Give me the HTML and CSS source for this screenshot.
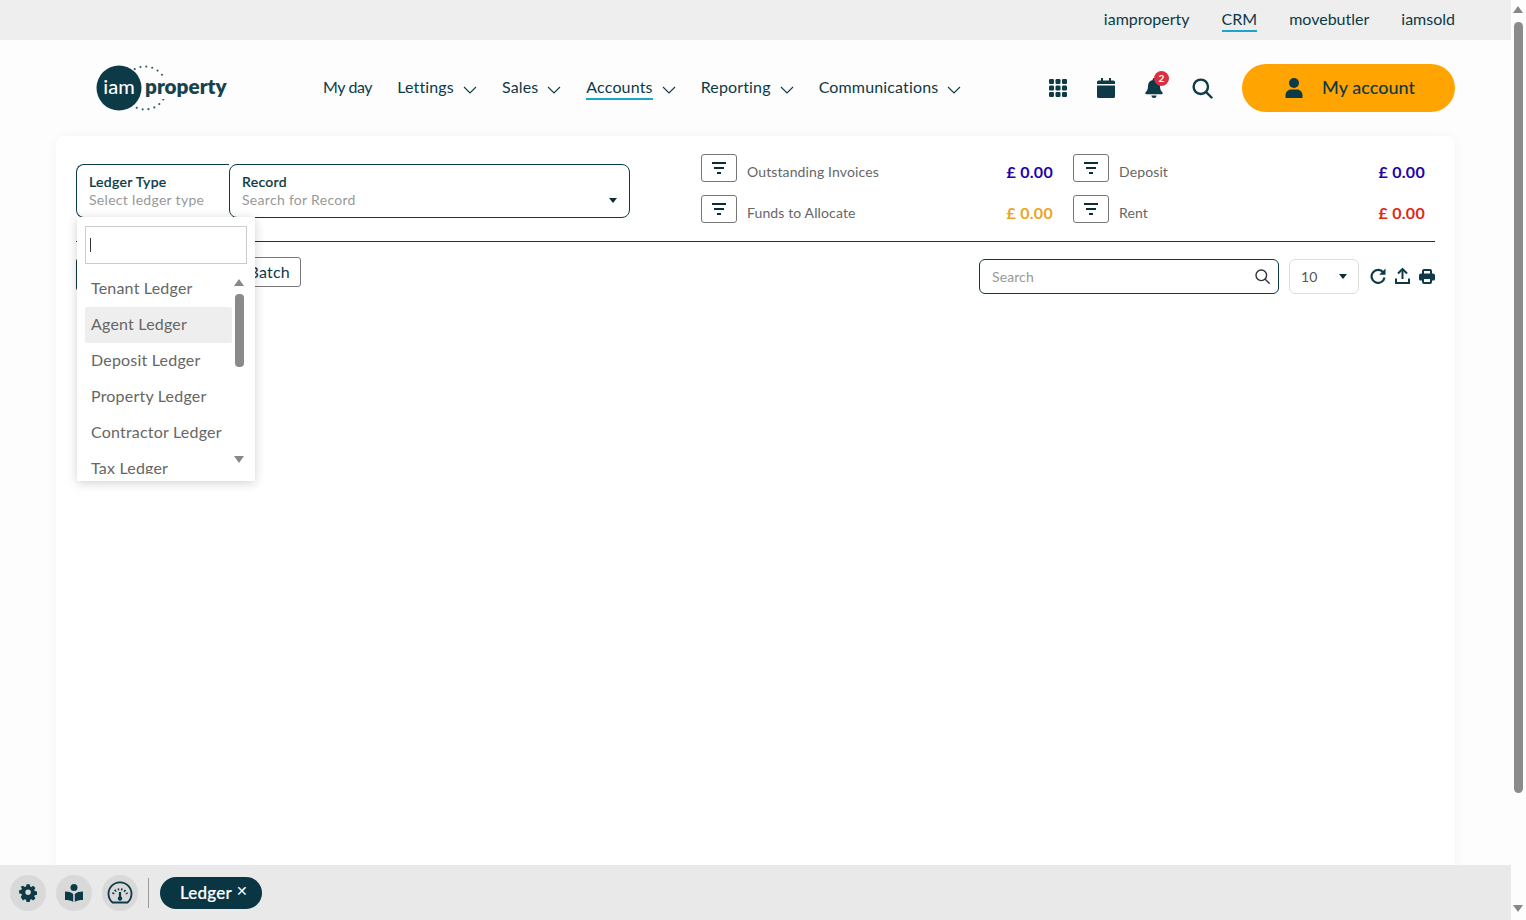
FILE: index.html
```html
<!DOCTYPE html>
<html lang="en">
<head>
<meta charset="utf-8">
<title>Ledger</title>
<link rel="stylesheet" href="styles.css">
</head>
<body>
<div class="viewport">
  <div class="page">
    <div class="topbar">
      <a class="top-link">iamproperty</a>
      <a class="top-link active">CRM</a>
      <a class="top-link">movebutler</a>
      <a class="top-link">iamsold</a>
    </div>
    <header class="header">
      <svg class="logo" width="144" height="56" viewBox="0 0 144 56">
        <circle cx="57" cy="28" r="21.5" fill="none" stroke="#3c5f69" stroke-width="2.200" stroke-linecap="round" stroke-dasharray="0 6"/>
        <rect x="52" y="17" width="92" height="22" class="logo-gap"/>
        <circle cx="31" cy="28" r="22.5" fill="#0c3a47"/>
        <text x="31" y="34" class="logo-iam" text-anchor="middle">iam</text>
        <text x="57" y="34" class="logo-prop">property</text>
      </svg>
      <nav class="nav">
        <a class="nav-item"><span class="nav-text nav-first">My day</span></a>
        <a class="nav-item"><span class="nav-text">Lettings</span><svg class="chev" width="14" height="8" viewBox="0 0 14 8"><path d="M1 1l6 6 6-6"/></svg></a>
        <a class="nav-item"><span class="nav-text">Sales</span><svg class="chev" width="14" height="8" viewBox="0 0 14 8"><path d="M1 1l6 6 6-6"/></svg></a>
        <a class="nav-item"><span class="nav-text current">Accounts</span><svg class="chev" width="14" height="8" viewBox="0 0 14 8"><path d="M1 1l6 6 6-6"/></svg></a>
        <a class="nav-item"><span class="nav-text">Reporting</span><svg class="chev" width="14" height="8" viewBox="0 0 14 8"><path d="M1 1l6 6 6-6"/></svg></a>
        <a class="nav-item"><span class="nav-text">Communications</span><svg class="chev" width="14" height="8" viewBox="0 0 14 8"><path d="M1 1l6 6 6-6"/></svg></a>
      </nav>
      <div class="header-icons">
        <span class="hicon"><svg width="18" height="18" viewBox="0 0 18 18" fill="#0c3a47"><rect x="0" y="0" width="5" height="5" rx="1.200"/><rect x="6.500" y="0" width="5" height="5" rx="1.200"/><rect x="13" y="0" width="5" height="5" rx="1.200"/><rect x="0" y="6.500" width="5" height="5" rx="1.200"/><rect x="6.500" y="6.500" width="5" height="5" rx="1.200"/><rect x="13" y="6.500" width="5" height="5" rx="1.200"/><rect x="0" y="13" width="5" height="5" rx="1.200"/><rect x="6.500" y="13" width="5" height="5" rx="1.200"/><rect x="13" y="13" width="5" height="5" rx="1.200"/></svg></span>
        <span class="hicon"><svg width="18" height="20" viewBox="0 0 18 20" fill="#0c3a47"><path d="M4 0h2v2.500h6V0h2v2.500h2.500A1.500 1.500 0 0 1 18 4v2H0V4a1.500 1.500 0 0 1 1.500-1.500H4zM0 7.500h18v11a1.500 1.500 0 0 1-1.500 1.500h-15A1.500 1.500 0 0 1 0 18.500z"/></svg></span>
        <span class="hicon bell"><svg width="18" height="20" viewBox="0 0 18 20" fill="#0c3a47"><path d="M9 0a1.300 1.300 0 0 1 1.300 1.300v.8c3 .6 4.700 3 4.700 6 0 3.700 1 5 2.500 6.500.5.600.2 1.600-.8 1.600H1.300c-1 0-1.300-1-.8-1.600C2 13.100 3 11.800 3 8.100c0-3 1.700-5.400 4.700-6v-.8A1.300 1.300 0 0 1 9 0zM6.500 17.500h5A2.500 2.500 0 0 1 9 20a2.500 2.500 0 0 1-2.500-2.500z"/></svg><span class="badge">2</span></span>
        <span class="hicon"><svg width="21" height="21" viewBox="0 0 21 21" fill="none" stroke="#0c3a47" stroke-width="2.400" stroke-linecap="round"><circle cx="8.800" cy="8.800" r="7.200"/><path d="M14 14l5.500 5.500"/></svg></span>
      </div>
      <button class="account">
        <svg width="20" height="20" viewBox="0 0 20 20" fill="#0c3a47"><circle cx="10" cy="5" r="5"/><path d="M1.500 20v-2.500c0-3.500 2.500-6 5.500-6h6c3 0 5.500 2.500 5.500 6V20z"/></svg>
        <span>My account</span>
      </button>
    </header>
    <main class="card">
      <section class="filters">
        <div class="selects">
          <div class="sel sel-type">
            <div class="sel-label">Ledger Type</div>
            <div class="sel-ph">Select ledger type</div>
          </div>
          <div class="sel sel-record">
            <div class="sel-label">Record</div>
            <div class="sel-ph">Search for Record</div>
            <span class="caret"></span>
          </div>
        </div>
        <div class="stats">
          <div class="stat"><button class="fbtn"><svg width="16" height="13" viewBox="0 0 16 13" fill="#0c2c36"><rect x="1" y="0" width="14" height="2"/><rect x="3" y="5" width="10" height="2"/><rect x="6" y="10" width="4" height="2"/></svg></button><span class="stat-label">Outstanding Invoices</span><span class="amt blue">£ 0.00</span></div>
          <div class="stat"><button class="fbtn"><svg width="16" height="13" viewBox="0 0 16 13" fill="#0c2c36"><rect x="1" y="0" width="14" height="2"/><rect x="3" y="5" width="10" height="2"/><rect x="6" y="10" width="4" height="2"/></svg></button><span class="stat-label">Deposit</span><span class="amt blue">£ 0.00</span></div>
          <div class="stat"><button class="fbtn"><svg width="16" height="13" viewBox="0 0 16 13" fill="#0c2c36"><rect x="1" y="0" width="14" height="2"/><rect x="3" y="5" width="10" height="2"/><rect x="6" y="10" width="4" height="2"/></svg></button><span class="stat-label">Funds to Allocate</span><span class="amt amber">£ 0.00</span></div>
          <div class="stat"><button class="fbtn"><svg width="16" height="13" viewBox="0 0 16 13" fill="#0c2c36"><rect x="1" y="0" width="14" height="2"/><rect x="3" y="5" width="10" height="2"/><rect x="6" y="10" width="4" height="2"/></svg></button><span class="stat-label">Rent</span><span class="amt red">£ 0.00</span></div>
        </div>
      </section>
      <section class="toolbar">
        <button class="tbtn-first"></button>
        <button class="tbtn-batch">Batch</button>
        <div class="search">
          <span class="search-ph">Search</span>
          <svg width="15" height="15" viewBox="0 0 15 15" fill="none" stroke="#333" stroke-width="1.400" stroke-linecap="round"><circle cx="6.300" cy="6.300" r="5.300"/><path d="M10.200 10.200l4 4"/></svg>
        </div>
        <div class="pagesize"><span>10</span><span class="caret"></span></div>
        <div class="tools">
          <svg width="16" height="16" viewBox="0 0 16 16" fill="none" stroke="#0c3a47" stroke-width="2.200"><path d="M13.300 4.500A6.500 6.500 0 1 0 14.500 9.500"/><path d="M15.500 .5v6.300H9.200z" fill="#0c3a47" stroke="none"/></svg>
          <svg width="15" height="16" viewBox="0 0 15 16" fill="none" stroke="#0c3a47" stroke-width="2"><path d="M7.500 11V2"/><path d="M3 5.500l4.500-4.500 4.500 4.500"/><path d="M1 10.500V15h13v-4.500"/></svg>
          <svg width="16" height="15" viewBox="0 0 16 15" fill="#0c3a47"><path fill-rule="evenodd" d="M5 0h6a2 2 0 0 1 2 2v2.500h1A2 2 0 0 1 16 6.500V10a1.500 1.500 0 0 1-1.500 1.500H13V13a2 2 0 0 1-2 2H5a2 2 0 0 1-2-2v-1.500H1.500A1.500 1.500 0 0 1 0 10V6.500a2 2 0 0 1 2-2h1V2a2 2 0 0 1 2-2zM5 2v2.500h6V2zM5 10v3h6v-3z"/></svg>
        </div>
      </section>
      <div class="dropdown">
        <div class="dd-search"><span class="cursor"></span></div>
        <div class="dd-body">
          <ul class="dd-list">
            <li>Tenant Ledger</li>
            <li class="hover">Agent Ledger</li>
            <li>Deposit Ledger</li>
            <li>Property Ledger</li>
            <li>Contractor Ledger</li>
            <li>Tax Ledger</li>
          </ul>
          <div class="dd-scroll">
            <span class="arrow-up"></span>
            <span class="dd-thumb"></span>
            <span class="arrow-down"></span>
          </div>
        </div>
      </div>
    </main>
    <footer class="footer">
      <span class="round"><svg width="18" height="18" viewBox="0 0 18 18" fill="#0c3a47"><path fill-rule="evenodd" d="M7.300 0h3.400l.5 2.400 1.300.6 2.100-1.300 2.400 2.400-1.300 2.100.6 1.300 2.400.5v3.400l-2.400.5-.6 1.300 1.300 2.100-2.400 2.400-2.100-1.300-1.300.6-.5 2.400H7.300l-.5-2.400-1.300-.6-2.100 1.300L1 13.900l1.300-2.100-.6-1.300L-.7 10V6.600l2.400-.5.6-1.300L1 2.700l2.400-1 2.100 1.300 1.300-.6zM9 5.800a3 3 0 1 0 0 6 3 3 0 0 0 0-6z" transform="translate(.8 .2) scale(.92)"/></svg></span>
      <span class="round"><svg width="20" height="18" viewBox="0 0 20 18" fill="#0c3a47"><circle cx="10" cy="3.500" r="3.500"/><path d="M1 7.500c3.500 0 6.500.8 8.200 2.500v8C7.500 16.500 4.500 16 1 16zM19 7.500c-3.500 0-6.500.8-8.200 2.500v8c1.700-1.500 4.700-2 8.200-2z"/></svg></span>
      <span class="round"><svg width="26" height="26" viewBox="0 0 26 26" fill="none" stroke="#0c3a47" stroke-width="1.800"><path d="M5.500 22.500a11.500 11.500 0 1 1 15 0z"/><path d="M6 14a7.500 7.500 0 0 1 14 0" stroke-dasharray="1.500 1.800" stroke-width="2.200"/><path d="M13 12v6" stroke-width="2.200"/><circle cx="13" cy="18.500" r="2.200" fill="#0c3a47" stroke="none"/></svg></span>
      <span class="foot-div"></span>
      <span class="pill">Ledger<span class="pill-x">✕</span></span>
    </footer>
  </div>
  <aside class="scrollbar">
    <span class="arrow-up"></span>
    <span class="thumb"></span>
    <span class="arrow-down"></span>
  </aside>
</div>
</body>
</html>
```
FILE: styles.css
```css
* { box-sizing: border-box; }
html, body { margin: 0; height: 100%; overflow: hidden; }
body { font-family: "Lato", "Open Sans", sans-serif; color: #0c3a47; background: #fdfdfd; }
.viewport { display: flex; height: 920px; }
.page { position: relative; width: 1511px; height: 920px; overflow: hidden; display: flex; flex-direction: column; }

.topbar { height: 40px; flex: none; background: #eeeeee; display: flex; justify-content: flex-end; align-items: flex-start; gap: 32px; padding: 8px 56px 0 0; }
.top-link { font-size: 16px; line-height: 21px; letter-spacing: 0; height: 24px; }
.top-link.active { border-bottom: 2px solid #1ba6c9; }

.header { height: 96px; flex: none; display: flex; align-items: center; padding: 0 56px 0 88px; }
.logo { flex: none; }
.logo-gap { fill: #fdfdfd; }
.logo-iam { font: 500 20px "Lato", sans-serif; fill: #fff; }
.logo-prop { font: 800 20.700px "Lato", sans-serif; fill: #17434f; }
.nav { display: flex; align-items: center; gap: 25px; margin-left: 91px; }
.nav-item { display: flex; align-items: center; gap: 9px; font-size: 16px; letter-spacing: .15px; line-height: 21px; }
.nav-text { display: block; height: 24px; }
.nav-first { letter-spacing: -.4px; }
.nav-text.current { border-bottom: 2px solid #1ba6c9; }
.chev { fill: none; stroke: #0c3a47; stroke-width: 1.100; margin-top: 4px; }
.header-icons { display: flex; margin-left: auto; margin-right: 16px; }
.hicon { position: relative; width: 48px; height: 24px; display: flex; align-items: center; justify-content: center; }
.badge { position: absolute; top: -5px; left: 24px; width: 15px; height: 15px; border-radius: 50%; background: #d9303f; color: #fff; font-size: 10px; font-weight: 700; line-height: 15px; text-align: center; }
.account { width: 213px; height: 48px; border: 0; border-radius: 24px; background: #ffa400; display: flex; align-items: center; gap: 18px; padding: 0 0 2px 42px; font: 500 18px "Lato", sans-serif; letter-spacing: .05px; color: #0c3a47; }
.account svg { margin-top: 2px; }

.card { position: relative; flex: 1; margin: 0 56px; background: #fff; border-radius: 8px 8px 0 0; box-shadow: 0 0 12px rgba(0,0,0,.04); padding: 0 20px; }
.filters { display: flex; align-items: flex-start; height: 106px; border-bottom: 1px solid #0c3a47; }
.selects { display: flex; margin-top: 28px; }
.sel { position: relative; height: 54px; border: 1px solid #0c3a47; padding: 8px 12px 0; }
.sel-type { width: 153px; border-right: 0; border-radius: 8px 0 0 8px; }
.sel-record { width: 401px; border-radius: 8px; }
.sel-label { font-size: 14px; line-height: 18px; letter-spacing: .3px; color: #0c3a47; font-weight: 500; -webkit-text-stroke: .2px #0c3a47; }
.sel-ph { font-size: 14px; line-height: 18px; letter-spacing: .3px; color: #999; white-space: nowrap; }
.caret { display: inline-block; width: 0; height: 0; border-left: 4px solid transparent; border-right: 4px solid transparent; border-top: 5px solid #0c2c36; }
.sel-record .caret { position: absolute; right: 12px; top: 33px; }
.stats { display: grid; grid-template-columns: 352px 352px; column-gap: 20px; row-gap: 13px; margin: 18px 0 0 71px; }
.stat { display: flex; align-items: center; height: 28px; }
.fbtn { width: 36px; height: 28px; flex: none; background: #fff; border: 1px solid #777; border-radius: 3px; padding: 0; display: flex; align-items: center; justify-content: center; }
.stat-label { margin: 6px 0 0 10px; font-size: 14px; letter-spacing: .12px; color: #666; }
.amt { margin: 6px 0 0 auto; font-size: 16px; font-weight: 700; letter-spacing: .3px; }
.blue { color: #2200b0; }
.amber { color: #eaa523; }
.red { color: #dd2a12; }

.toolbar { display: flex; align-items: flex-start; padding-top: 15px; }
.tbtn-first { width: 80px; height: 33px; margin-top: 1px; background: #fff; border: 1px solid #0c3a47; border-radius: 3px; }
.tbtn-batch { margin-left: 90px; width: 55px; height: 30px; padding: 0 10px 2px 0; text-align: right; background: #fff; border: 1px solid #777; border-radius: 3px; font: 16px "Lato", sans-serif; letter-spacing: .25px; color: #0c3a47; }
.search { margin: 2px 0 0 auto; width: 300px; height: 35px; border: 1px solid #0c3a47; border-radius: 6px; display: flex; align-items: center; justify-content: space-between; padding: 0 8px 0 12px; }
.search-ph { font-size: 14px; letter-spacing: .1px; color: #999; }
.pagesize { margin: 2px 0 0 10px; width: 70px; height: 35px; border: 1px solid #ddd; border-radius: 6px; display: flex; align-items: center; justify-content: space-between; padding: 0 11px; font-size: 14px; letter-spacing: .1px; color: #555; }
.tools { margin: 11px 0 0 11px; display: flex; gap: 9px; align-items: center; }

.dropdown { position: absolute; left: 21px; top: 81px; width: 178px; height: 264px; background: #fff; box-shadow: 0 2px 10px rgba(0,0,0,.18); padding: 9px 8px 0; }
.dd-search { height: 38px; width: 162px; border: 1px solid #ccc; display: flex; align-items: center; padding-left: 4px; }
.cursor { width: 1px; height: 14px; background: #333; }
.dd-body { display: flex; margin-top: 7px; height: 204px; }
.dd-list { list-style: none; margin: 0; padding: 0; width: 147px; height: 203px; overflow: hidden; }
.dd-list li { height: 36px; line-height: 34px; padding: 0 0 2px 6px; font-size: 16px; letter-spacing: .2px; color: #666; white-space: nowrap; border-radius: 2px; }
.dd-list li.hover { background: #eeeeee; }
.dd-scroll { position: relative; width: 9px; margin-left: 3px; }
.dd-thumb { position: absolute; left: 0; top: 23px; width: 9px; height: 73px; border-radius: 4px; background: #8a8a8a; }
.arrow-up, .arrow-down { position: absolute; width: 0; height: 0; border-left: 5px solid transparent; border-right: 5px solid transparent; }
.arrow-up { border-bottom: 7px solid #888; }
.arrow-down { border-top: 7px solid #888; }
.dd-scroll .arrow-up { left: -1px; top: 8px; }
.dd-scroll .arrow-down { left: -1px; top: 185px; }

.footer { position: absolute; left: 0; right: 0; bottom: 0; height: 55px; background: #e9e9e9; display: flex; align-items: center; padding-left: 10px; }
.round { width: 36px; height: 36px; border-radius: 50%; background: #d9d9d9; margin-right: 10px; display: flex; align-items: center; justify-content: center; flex: none; }
.foot-div { width: 1px; height: 30px; background: #999; margin-right: 11px; }
.pill { width: 102px; height: 32px; border-radius: 16px; background: #0a3644; color: #fff; display: flex; align-items: center; justify-content: center; gap: 4px; font-size: 17px; font-weight: 500; letter-spacing: .2px; -webkit-text-stroke: .2px #fff; padding: 0 0 1px 6px; }
.pill-x { font-size: 14px; font-weight: 400; margin-top: -3px; -webkit-text-stroke: 0; }

.scrollbar { position: relative; width: 15px; height: 920px; background: #fdfdfd; flex: none; }
.scrollbar .arrow-up { left: 2px; top: 6px; }
.scrollbar .arrow-down { left: 2px; top: 905px; }
.thumb { position: absolute; left: 3px; top: 22px; width: 9px; height: 771px; border-radius: 5px; background: #8b8b8b; }
```
